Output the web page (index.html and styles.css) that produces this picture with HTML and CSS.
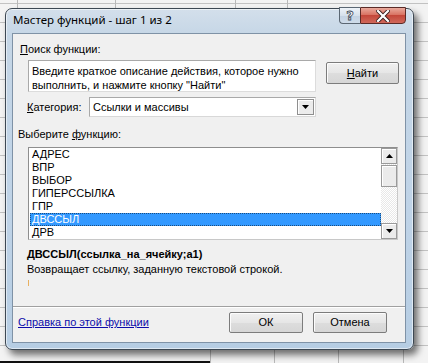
FILE: index.html
```html
<!DOCTYPE html>
<html lang="ru">
<head>
<meta charset="utf-8">
<title>Мастер функций</title>
<link rel="stylesheet" href="styles.css">
</head>
<body>
<div class="desk">
  <div class="window">
    <div class="titlebar">
      <span class="title">Мастер функций - шаг 1 из 2</span>
      <div class="caption-btns">
        <div class="cap-help">?</div>
        <div class="cap-close">
          <svg width="14" height="12" viewBox="0 0 14 12"><path d="M2 1 L12 11 M12 1 L2 11" stroke="#3a2020" stroke-width="4" stroke-linecap="square"/><path d="M2 1 L12 11 M12 1 L2 11" stroke="#ffffff" stroke-width="2.2" stroke-linecap="square"/></svg>
        </div>
      </div>
    </div>
    <div class="client">
      <div class="lbl lbl-search"><u>П</u>оиск функции:</div>
      <div class="search-row">
        <div class="search-box">Введите краткое описание действия, которое нужно<br>выполнить, и нажмите кнопку "Найти"</div>
        <div class="btn btn-find"><u>Н</u>айти</div>
      </div>
      <div class="cat-row">
        <span class="lbl-cat"><u>К</u>атегория:</span>
        <div class="select">
          <span class="select-text">Ссылки и массивы</span>
          <span class="select-btn"><svg width="7" height="4" viewBox="0 0 7 4"><polygon points="0,0 7,0 3.5,4" fill="#000"/></svg></span>
        </div>
      </div>
      <div class="lbl lbl-func">Выберите <u>ф</u>ункцию:</div>
      <div class="listbox">
        <div class="items">
          <div class="item">АДРЕС</div>
          <div class="item">ВПР</div>
          <div class="item">ВЫБОР</div>
          <div class="item">ГИПЕРССЫЛКА</div>
          <div class="item">ГПР</div>
          <div class="item sel">ДВССЫЛ</div>
          <div class="item">ДРВ</div>
        </div>
        <div class="vscroll">
          <div class="sb-btn"><svg width="7" height="4" viewBox="0 0 7 4"><polygon points="0,4 7,4 3.5,0" fill="#000"/></svg></div>
          <div class="sb-thumb"></div>
          <div class="sb-track"></div>
          <div class="sb-btn"><svg width="7" height="4" viewBox="0 0 7 4"><polygon points="0,0 7,0 3.5,4" fill="#000"/></svg></div>
        </div>
      </div>
      <div class="syntax">ДВССЫЛ(ссылка_на_ячейку;а1)</div>
      <div class="desc">Возвращает ссылку, заданную текстовой строкой.</div>
      <div class="tick"></div>
      <div class="spacer"></div>
      <div class="sep"></div>
      <div class="bottom-row">
        <a class="help-link">Справка по этой функции</a>
        <div class="btn btn-ok">ОК</div>
        <div class="btn btn-cancel">Отмена</div>
      </div>
    </div>
  </div>
</div>
</body>
</html>
```

FILE: styles.css
```css
html, body {
  margin: 0;
  padding: 0;
}
body {
  width: 428px;
  height: 363px;
  overflow: hidden;
  font-family: "Liberation Sans", Arial, sans-serif;
  font-size: 11px;
  color: #000;
}
.desk {
  width: 428px;
  height: 363px;
  position: relative;
  overflow: hidden;
  background-color: #f3f3f3;
  background-image:
    linear-gradient(#111, #111),
    linear-gradient(#b9b9b9, #b9b9b9),
    linear-gradient(#b9b9b9, #b9b9b9),
    linear-gradient(#b9b9b9, #b9b9b9),
    linear-gradient(#b9b9b9, #b9b9b9),
    linear-gradient(#b9b9b9, #b9b9b9),
    linear-gradient(#b9b9b9, #b9b9b9),
    linear-gradient(#b9b9b9, #b9b9b9),
    linear-gradient(#b9b9b9, #b9b9b9),
    repeating-linear-gradient(to bottom, transparent 0 3px, #c2c2c2 3px 4px, transparent 4px 19px);
  background-size:
    210px 3px,
    1px 9px, 1px 9px, 1px 9px, 1px 9px,
    1px 20px, 1px 20px, 1px 20px, 1px 20px,
    100% 100%;
  background-position:
    0 361px,
    17px 0, 115px 0, 235px 0, 287px 0,
    210px 345px, 274px 345px, 338px 345px, 403px 345px,
    0 0;
  background-repeat: no-repeat;
}

/* window frame */
.window {
  position: absolute;
  left: 5px;
  top: 8px;
  width: 409px;
  height: 342px;
  box-sizing: border-box;
  border: 1px solid #3d4853;
  border-radius: 7px;
  background: linear-gradient(to bottom, #d3dfeb 0%, #c5d6e6 8%, #bfd3e7 60%, #b6cde3 100%);
  box-shadow: 4px 5px 7px rgba(0,0,0,0.55), inset 0 0 0 1px rgba(255,255,255,0.55);
  display: flex;
  flex-direction: column;
  padding: 0 7px 6px 6px;
}
.titlebar {
  height: 24px;
  display: flex;
  align-items: flex-start;
  flex-shrink: 0;
}
.title {
  font-family: "Noto Sans", "Open Sans", sans-serif;
  font-size: 11.5px;
  color: #000;
  margin-left: 1px;
  margin-top: 3px;
  line-height: 16px;
}
.caption-btns {
  margin-left: auto;
  margin-top: -2px;
  display: flex;
}
.cap-help {
  width: 21px;
  height: 17px;
  box-sizing: border-box;
  border: 1px solid #5b6773;
  border-right: none;
  border-radius: 0 0 0 4px;
  background: linear-gradient(to bottom, #eef3f8 0%, #d6e1ec 50%, #c3d2e2 51%, #cfdcea 100%);
  font-family: "DejaVu Sans", sans-serif;
  font-weight: bold;
  font-size: 13px;
  line-height: 15px;
  text-align: center;
  color: #fff;
  -webkit-text-stroke: 0.8px #3a4755;
}
.cap-close {
  width: 46px;
  height: 17px;
  box-sizing: border-box;
  border: 1px solid #5a2a26;
  border-radius: 0 0 4px 0;
  background: linear-gradient(to bottom, #e9a99c 0%, #d97363 45%, #c4473a 50%, #d0685a 100%);
  display: flex;
  align-items: center;
  justify-content: center;
}

/* client area */
.client {
  flex: 1;
  box-sizing: border-box;
  border: 1px solid #7f92a6;
  background: #f0f0f0;
  display: flex;
  flex-direction: column;
  font-family: "Liberation Sans", Arial, sans-serif;
  font-size: 11px;
}
.lbl {
  line-height: 13px;
}
.lbl-search {
  margin: 9px 0 0 7px;
}
.search-row {
  display: flex;
  margin: 4px 0 0 15px;
  align-items: flex-start;
}
.search-box {
  width: 288px;
  height: 32px;
  box-sizing: border-box;
  background: #fff;
  border: 1px solid #a9a9a9;
  border-right-color: #dcdcdc;
  border-bottom-color: #dcdcdc;
  padding: 3px 0 0 3px;
  line-height: 14px;
  white-space: nowrap;
  overflow: hidden;
}
.btn {
  box-sizing: border-box;
  border: 1px solid #7c7c7c;
  border-radius: 2px;
  background: linear-gradient(to bottom, #f0f0f0 0%, #e6e6e6 50%, #dddddd 51%, #d6d6d6 100%);
  box-shadow: inset 1px 1px 0 #fcfcfc;
  display: flex;
  align-items: center;
  justify-content: center;
  line-height: 13px;
}
.btn-find {
  width: 73px;
  height: 22px;
  margin: 2px 0 0 10px;
}
.cat-row {
  display: flex;
  align-items: center;
  margin: 5px 0 0 14px;
}
.lbl-cat {
  width: 62px;
  line-height: 13px;
}
.select {
  width: 227px;
  height: 20px;
  box-sizing: border-box;
  background: #fff;
  border: 1px solid #a9a9a9;
  border-right-color: #d8d8d8;
  border-bottom-color: #d8d8d8;
  display: flex;
  align-items: center;
  padding: 1px;
}
.select-text {
  flex: 1;
  padding-left: 2px;
}
.select-btn {
  width: 17px;
  height: 16px;
  box-sizing: border-box;
  border: 1px solid #8f8f8f;
  background: #ececec;
  box-shadow: inset 1px 1px 0 #fff;
  display: flex;
  align-items: center;
  justify-content: center;
}
.lbl-func {
  margin: 11px 0 0 5px;
}
.listbox {
  width: 370px;
  height: 93px;
  margin: 6px 0 0 15px;
  box-sizing: border-box;
  background: #fff;
  border: 1px solid #8e8e8e;
  border-right-color: #c8c8c8;
  border-bottom-color: #c8c8c8;
  display: flex;
  overflow: hidden;
}
.items {
  flex: 1;
  padding: 0 0 0 1px;
  overflow: hidden;
}
.item {
  height: 13px;
  line-height: 13px;
  padding-left: 2px;
  white-space: nowrap;
}
.item.sel {
  background: #3399ff;
  color: #fff;
  outline: 1px dotted #1a4d80;
  outline-offset: -1px;
}
.vscroll {
  width: 16px;
  display: flex;
  flex-direction: column;
  background-color: #f4f4f4;
  background-image: repeating-conic-gradient(#ffffff 0 25%, #e8e8e8 0 50%);
  background-size: 2px 2px;
}
.sb-btn, .sb-thumb {
  box-sizing: border-box;
  border: 1px solid #9a9a9a;
  background: #ebebeb;
  box-shadow: inset 1px 1px 0 #fff;
  display: flex;
  align-items: center;
  justify-content: center;
}
.sb-btn {
  height: 16px;
}
.sb-thumb {
  height: 22px;
  margin-top: 1px;
}
.sb-track {
  flex: 1;
}
.syntax {
  font-weight: bold;
  margin: 8px 0 0 14px;
  line-height: 13px;
}
.desc {
  margin: 2px 0 0 14px;
  line-height: 13px;
}
.tick {
  width: 1px;
  height: 6px;
  background: #e8b060;
  margin: 4px 0 0 15px;
}
.spacer {
  flex: 1;
}
.sep {
  height: 1px;
  background: #a0a0a0;
  border-bottom: 1px solid #fff;
}
.bottom-row {
  display: flex;
  align-items: center;
  padding: 4px 18px 9px 5px;
}
.help-link {
  color: #0c0caa;
  text-decoration: underline;
  line-height: 13px;
  margin-right: auto;
}
.btn-ok, .btn-cancel {
  width: 74px;
  height: 21px;
}
.btn-cancel {
  margin-left: 10px;
}
```
